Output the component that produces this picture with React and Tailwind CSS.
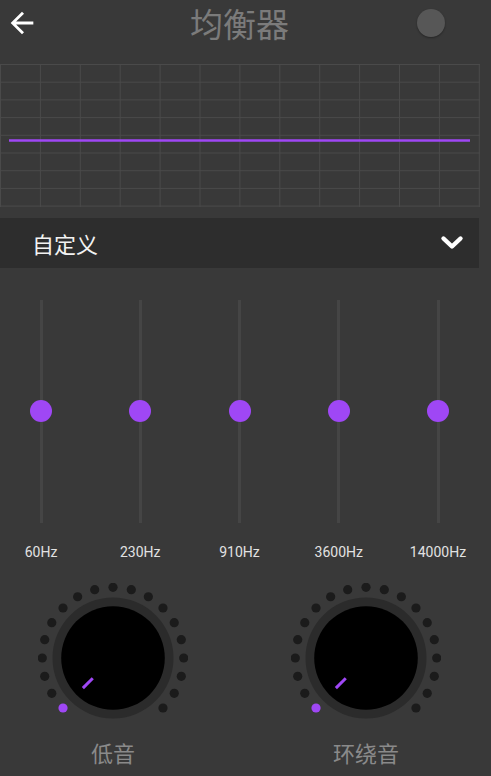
import React from "react";

const PURPLE = "#9f47f5";

function Grid() {
  const w = 480;
  const h = 143;
  const vx = [];
  for (let k = 0; k <= 12; k++) vx.push(0.5 + k * 39.9);
  const hy = [];
  for (let k = 0; k <= 8; k++) hy.push(0.5 + k * 17.7);
  return (
    <svg width={w} height={h} viewBox={`0 0 ${w} ${h}`} className="block">
      {vx.map((x, i) => (
        <line key={"v" + i} x1={x} y1={0} x2={x} y2={h} stroke="#4a4a4a" strokeWidth="1" />
      ))}
      {hy.map((y, i) => (
        <line key={"h" + i} x1={0} y1={y} x2={w} y2={y} stroke="#4a4a4a" strokeWidth="1" />
      ))}
      <line x1={9} y1={76.5} x2={470} y2={76.5} stroke={PURPLE} strokeWidth="2.6" />
    </svg>
  );
}

function Slider({ label }) {
  return (
    <div className="flex flex-col items-center w-[80px]">
      <div className="relative h-[223px] w-[22px] flex justify-center">
        <div className="w-[3px] h-full bg-[#454545]" />
        <div className="absolute top-[100px] left-0 w-[22px] h-[22px] rounded-full bg-[#9f47f5]" />
      </div>
      <div
        className="mt-[19px] text-[14px] leading-[20px] text-[#e2e2e2]"
        style={{ fontFamily: "Roboto, 'Noto Sans', sans-serif" }}
      >
        {label}
      </div>
    </div>
  );
}

function Knob({ label }) {
  const c = 75;
  const R = 70.7;
  const dots = [];
  for (let i = 0; i < 19; i++) {
    const t = ((-135 + i * 15) * Math.PI) / 180;
    dots.push({ x: c + R * Math.sin(t), y: c - R * Math.cos(t), on: i === 0 });
  }
  const d = Math.SQRT1_2;
  return (
    <div className="flex flex-col items-center w-[150px]">
      <svg width="150" height="150" viewBox="0 0 150 150" className="block">
        {dots.map((p, i) => (
          <circle key={i} cx={p.x} cy={p.y} r="4.6" fill={p.on ? PURPLE : "#1b1b1b"} />
        ))}
        <circle cx={c} cy={c} r="60.5" fill="#2b2b2b" />
        <circle cx={c} cy={c} r="51.8" fill="#000000" />
        <line
          x1={c - 28.6 * d}
          y1={c + 28.6 * d}
          x2={c - 42.6 * d}
          y2={c + 42.6 * d}
          stroke={PURPLE}
          strokeWidth="3"
        />
      </svg>
      <div
        className="mt-[4px] text-[22px] leading-[30px] text-[#8a8a8a]"
        style={{ fontFamily: "'Noto Sans CJK SC', sans-serif" }}
      >
        {label}
      </div>
    </div>
  );
}

export default function App() {
  return (
    <div className="w-[491px] min-h-[776px] bg-[#393939] overflow-hidden">
      <div className="w-[479px]">
        <div className="grid grid-cols-[1fr_auto_1fr] items-center h-[46px]">
          <div className="flex items-center pl-[5px]">
            <svg width="34" height="34" viewBox="0 0 24 24">
              <path d="M20 11H7.83l5.59-5.59L12 4l-8 8 8 8 1.41-1.41L7.83 13H20v-2z" fill="#ffffff" />
            </svg>
          </div>
          <div
            className="text-[33px] leading-[46px] text-[#7b7b7b]"
            style={{ fontFamily: "'Noto Sans CJK SC', sans-serif" }}
          >
            均衡器
          </div>
          <div className="flex justify-end pr-[34px]">
            <div className="w-[28px] h-[28px] rounded-full bg-[#575757] shadow-[0_1px_2px_rgba(0,0,0,0.35)]" />
          </div>
        </div>

        <div className="mt-[18px]">
          <Grid />
        </div>

        <div className="mt-[11px] h-[50px] bg-[#2d2d2d] flex items-center justify-between pl-[32px] pr-[15px]">
          <div
            className="text-[22px] leading-[30px] text-[#f2f2f2]"
            style={{ fontFamily: "'Noto Sans CJK SC', sans-serif" }}
          >
            自定义
          </div>
          <svg width="24" height="16" viewBox="0 0 24 16">
            <polyline points="3.5,3.5 12,11.5 20.5,3.5" fill="none" stroke="#ffffff" strokeWidth="4.4" strokeLinecap="round" strokeLinejoin="round" />
          </svg>
        </div>

        <div className="mt-[32px] flex justify-between px-[1px]">
          <Slider label="60Hz" />
          <Slider label="230Hz" />
          <Slider label="910Hz" />
          <Slider label="3600Hz" />
          <Slider label="14000Hz" />
        </div>

        <div className="mt-[21px] flex justify-between px-[38px]">
          <Knob label="低音" />
          <Knob label="环绕音" />
        </div>
      </div>
    </div>
  );
}
